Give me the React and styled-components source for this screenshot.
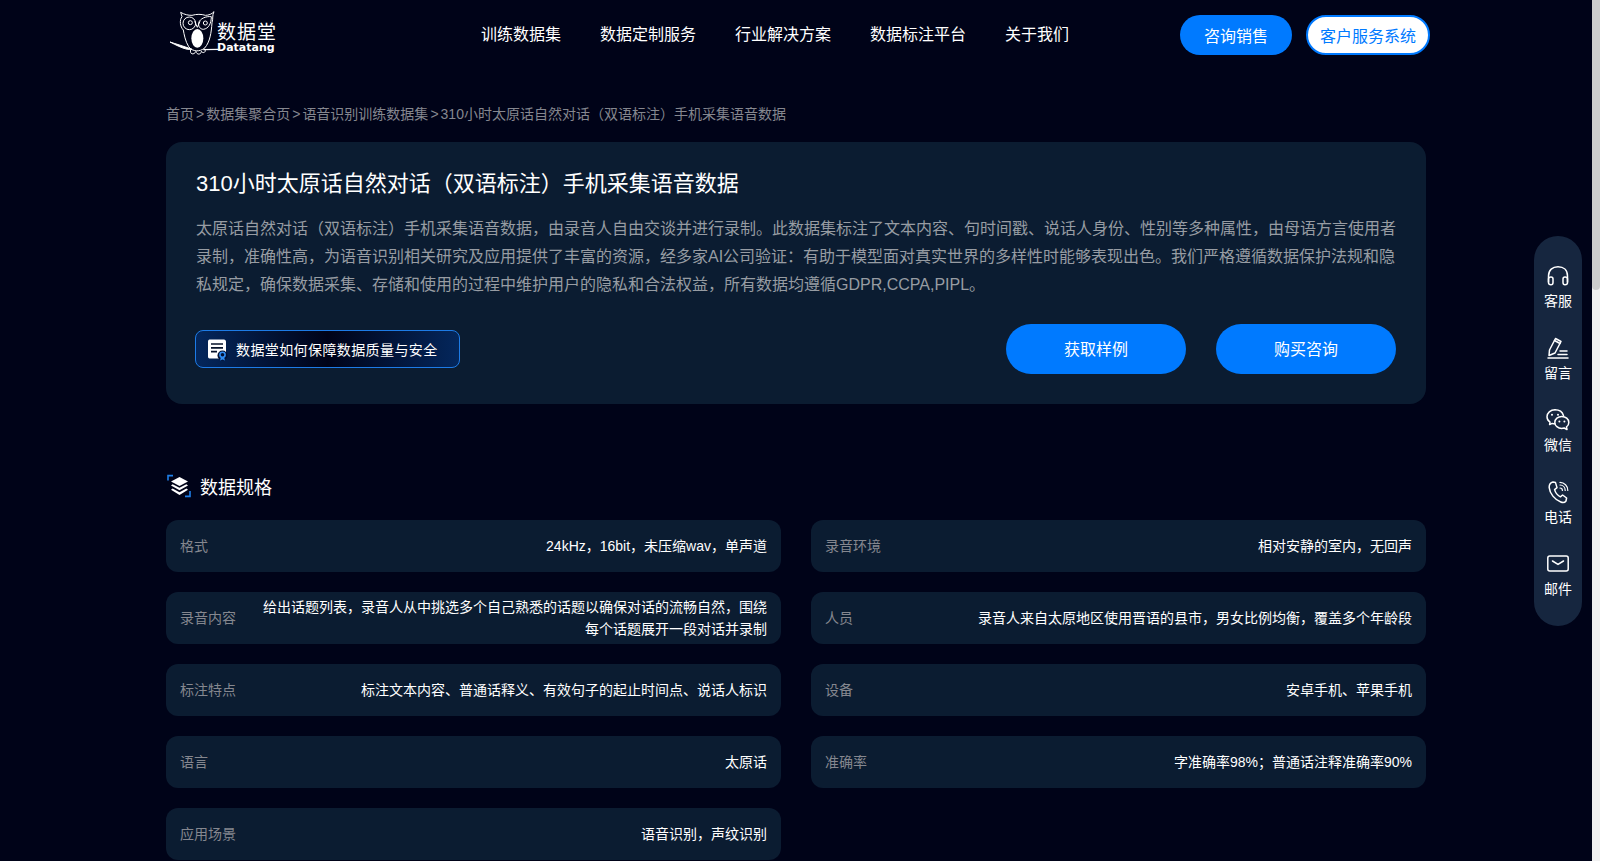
import React from 'react';
import styled, { createGlobalStyle } from 'styled-components';

const Global = createGlobalStyle`
  html { background: #000318; }
  body {
    margin: 0;
    background: #000318;
    color: #fff;
    font-family: "Liberation Sans", "Noto Sans CJK SC", sans-serif;
  }
  #root { width: 1592px; }
`;

const ScrollTrack = styled.div`
  position: fixed;
  top: 0;
  right: 0;
  bottom: 0;
  width: 8px;
  background: #f1f1f1;
`;

const ScrollThumb = styled.div`
  height: 290px;
  background: #cdcdcd;
  border-radius: 0 0 4px 4px;
`;

const Page = styled.div`
  width: 1260px;
  margin: 0 auto;
  padding-bottom: 40px;
`;

const Header = styled.header`
  height: 70px;
  display: flex;
  align-items: center;
`;

const Logo = styled.a`
  display: flex;
  width: 316px;
  height: 55px;
  margin-left: -1px;
  color: #fff;
`;

const LogoWords = styled.div`
  display: flex;
  flex-direction: column;
  margin-left: -8px;
  padding-top: 15px;
`;

const LogoName = styled.span`
  font-size: 19px;
  line-height: 19px;
  letter-spacing: 1px;
`;

const LogoLatin = styled.span`
  font-family: "DejaVu Sans", sans-serif;
  font-size: 11px;
  line-height: 10px;
  font-weight: 700;
  margin-top: 1px;
`;

const Nav = styled.nav`
  display: flex;
  gap: 39px;
  font-size: 16px;
  margin-top: -4px;
`;

const NavLink = styled.a`
  color: #fff;
  white-space: nowrap;
`;

const HeaderActions = styled.div`
  display: flex;
  gap: 14px;
  margin-left: auto;
  margin-right: -4px;
`;

const PillButton = styled.a`
  box-sizing: border-box;
  height: 40px;
  display: flex;
  align-items: center;
  justify-content: center;
  border-radius: 20px;
  font-size: 16px;
  width: ${p => p.$w}px;
  background: ${p => (p.$light ? '#fff' : '#007aff')};
  color: ${p => (p.$light ? '#007aff' : '#fff')};
  border: ${p => (p.$light ? '2px solid #007aff' : '0')};
`;

const Crumbs = styled.div`
  padding-top: 35px;
  height: 37px;
  font-size: 14px;
  line-height: 18px;
  color: #85878f;
  display: flex;
  gap: 2px;
`;

const IntroCard = styled.section`
  box-sizing: border-box;
  height: 262px;
  padding: 25px 30px 30px;
  background: #0b1c31;
  border-radius: 16px;
`;

const Title = styled.h1`
  margin: 0;
  font-size: 22px;
  line-height: 34px;
  font-weight: 400;
`;

const Desc = styled.p`
  margin: 14px 0 0;
  font-size: 16px;
  line-height: 28px;
  color: #979ca3;
`;

const IntroFoot = styled.div`
  margin-top: 25px;
  display: flex;
  align-items: center;
`;

const DocLink = styled.a`
  box-sizing: border-box;
  width: 265px;
  height: 38px;
  margin-left: -1px;
  display: flex;
  align-items: center;
  gap: 8px;
  padding-left: 11px;
  font-size: 14px;
  letter-spacing: 0.4px;
  border: 1px solid #1d7be6;
  border-radius: 8px;
  background: linear-gradient(90deg, #04275c 0%, #000318 50%, #04275c 100%);
  color: #fff;
`;

const FootActions = styled.div`
  display: flex;
  gap: 30px;
  margin-left: auto;
`;

const BigButton = styled.a`
  box-sizing: border-box;
  width: 180px;
  height: 50px;
  padding-bottom: 2px;
  border-radius: 25px;
  background: #007aff;
  color: #fff;
  font-size: 16px;
  display: flex;
  align-items: center;
  justify-content: center;
`;

const SectionHead = styled.h2`
  margin: 65px 0 0;
  height: 34px;
  display: flex;
  align-items: center;
  gap: 9px;
  font-size: 18px;
  font-weight: 400;
`;

const SpecGrid = styled.div`
  margin-top: 17px;
  display: grid;
  grid-template-columns: 615px 615px;
  column-gap: 30px;
  row-gap: 20px;
`;

const SpecRow = styled.div`
  box-sizing: border-box;
  height: 52px;
  padding: 0 14px;
  display: flex;
  align-items: center;
  gap: 20px;
  background: #0b1c31;
  border-radius: 12px;
  font-size: 14px;
  line-height: 22px;
`;

const SpecLabel = styled.span`
  flex: none;
  color: #85878f;
`;

const SpecValue = styled.span`
  flex: 1;
  text-align: right;
  color: #fff;
`;

const Side = styled.aside`
  position: fixed;
  left: 1534px;
  top: 236px;
  width: 48px;
  height: 390px;
  box-sizing: border-box;
  padding-top: 28px;
  border-radius: 24px;
  background: #16263f;
  display: flex;
  flex-direction: column;
  align-items: center;
  gap: 20px;
`;

const SideItem = styled.a`
  display: flex;
  flex-direction: column;
  align-items: center;
  gap: 3px;
  font-size: 14px;
  line-height: 20px;
  color: #fff;
  height: 52px;
`;

const Owl = () => (
  <svg width="60" height="55" viewBox="45 22 180 165" fill="none" stroke="#fff" strokeWidth="3">
    <path d="M92 35 C104 42 114 44 126 44 C140 40 154 40 166 44 C176 44 186 40 192 33 C186 44 190 54 186 66 C184 96 180 124 164 142 C150 154 128 154 116 138 C106 122 102 100 100 88 C90 78 88 58 96 48 Z" />
    <circle cx="118" cy="68" r="19" />
    <circle cx="121" cy="66" r="6" />
    <path d="M146 66 C150 54 168 46 184 48 C184 68 176 84 160 86 C150 86 144 76 146 66 Z" />
    <circle cx="166" cy="67" r="6" />
    <path d="M134 62 L142 80 L150 62" />
    <ellipse cx="142" cy="113" rx="18" ry="28" fill="#fff" stroke="none" />
    <path d="M60 124 C78 130 100 136 126 146 L112 146 C94 142 76 132 60 124 Z" fill="#fff" />
    <path d="M160 147 L206 146" strokeWidth="4" />
    <path d="M122 146 C118 162 132 164 138 152 C140 164 154 162 154 152 C160 160 170 154 164 144" />
  </svg>
);

const stroke = { fill: 'none', stroke: '#fff', strokeWidth: 1.5, strokeLinecap: 'round', strokeLinejoin: 'round' };

const Headset = () => (
  <svg width="24" height="24" viewBox="0 0 24 24" {...stroke}>
    <path d="M2.5 18 V12 C2.5 6 6.5 2.8 12 2.8 C17.5 2.8 21.5 6 21.5 12 V18" />
    <path d="M2.5 15 C2.5 13.6 3.6 13 5 13 C6.2 13 7 13.8 7 15 V18.5 C7 20 6.2 20.8 5 20.8 C3.6 20.8 2.5 20 2.5 18.5 Z" />
    <path d="M21.5 15 C21.5 13.6 20.4 13 19 13 C17.8 13 17 13.8 17 15 V18.5 C17 20 17.8 20.8 19 20.8 C20.4 20.8 21.5 20 21.5 18.5 Z" />
  </svg>
);
const Note = () => (
  <svg width="24" height="24" viewBox="0 0 24 24" {...stroke}>
    <path d="M2 22 H22" />
    <path d="M3 19.5 L3.5 14 L9.5 2.5 L15 5.5 L9 17 Z" />
    <path d="M8.5 4.5 L14 7.5" />
    <path d="M14 15 H21 M12 18.5 H21" />
  </svg>
);
const Wechat = () => (
  <svg width="24" height="24" viewBox="0 0 24 24" {...stroke}>
    <path d="M9 1.8 C4.4 1.8 1 5 1 8.8 C1 11 2.2 13 4 14.2 L3.6 16.6 L6.2 15.4 C7 15.6 7.8 15.8 8.6 15.8" />
    <path d="M17.5 7.6 C16.5 4.2 13 1.8 9 1.8" />
    <path d="M15.8 8.4 C19.6 8.4 22.8 11 22.8 14.4 C22.8 16.2 22 17.8 20.5 18.8 L21 21.6 L18.2 20 C17.4 20.2 16.6 20.4 15.8 20.4 C12 20.4 8.8 17.8 8.8 14.4 C8.8 11 12 8.4 15.8 8.4 Z" />
    <circle cx="6" cy="6.8" r="1" fill="#fff" stroke="none" />
    <circle cx="12" cy="6.8" r="1" fill="#fff" stroke="none" />
    <circle cx="13.4" cy="13.4" r="1" fill="#fff" stroke="none" />
    <circle cx="18.4" cy="13.4" r="1" fill="#fff" stroke="none" />
  </svg>
);
const Phone = () => (
  <svg width="24" height="24" viewBox="0 0 24 24" {...stroke}>
    <path d="M7 2 L9.5 2.6 L11 7.6 L8.6 9.6 C9.4 12.6 11.6 15.4 14.4 16.8 L16.6 15 L20.6 18 L20 21 C18.8 22.6 16.6 22.8 14.8 22 C8.6 19.6 3.8 13.6 3.2 7.6 C3 4.8 4.8 2.6 7 2 Z" />
    <path d="M14 8 C15.4 8 16.4 9 16.4 10.4" strokeWidth="1.2" />
    <path d="M14 5 C17 5 19.2 7.4 19.2 10.4" strokeWidth="1.2" />
    <path d="M14 2.4 C18.4 2.4 21.8 6 21.8 10.4" strokeWidth="1.2" />
  </svg>
);
const Mail = () => (
  <svg width="24" height="24" viewBox="0 0 24 24" {...stroke}>
    <rect x="1.8" y="4" width="20.4" height="15" rx="2" />
    <path d="M6.5 9 L12 12.4 L17.5 9" />
  </svg>
);

const DocIcon = () => (
  <svg width="21" height="24" viewBox="0 0 21 24">
    <path d="M2.5 2.5 H17 C18 2.5 19 3.5 19 4.5 V21.5 H2.5 C1.5 21.5 1 20.5 1 19.5 V4.5 C1 3.5 1.5 2.5 2.5 2.5 Z" fill="#fff" />
    <path d="M4 7 H16 M4 10.8 H16 M4 14.6 H10" stroke="#06122a" strokeWidth="1.7" />
    <circle cx="15.5" cy="18.5" r="5" fill="#021033" />
    <circle cx="15.5" cy="17.8" r="2.6" fill="none" stroke="#2f8cf2" strokeWidth="1.6" />
    <path d="M13 23.6 L14 20 H17 L18 23.6 L15.5 22.6 Z" fill="#2f8cf2" />
  </svg>
);

const SpecIcon = () => (
  <svg width="25" height="24" viewBox="0 0 25 24">
    <path d="M2 6.5 V1.6 H7 M24 17 V22.4 H19" fill="none" stroke="#1e7fe8" strokeWidth="1.6" />
    <path d="M13.5 3 L22 7.5 L13.5 12 L5 7.5 Z" fill="#fff" />
    <path d="M6.6 10.2 L13.5 13.8 L20.4 10.2 L22 11.4 L13.5 16.2 L5 11.4 Z" fill="#fff" />
    <path d="M6.6 14.6 L13.5 18.2 L20.4 14.6 L22 15.8 L13.5 21 L5 15.8 Z" fill="#fff" />
  </svg>
);

const navItems = ['训练数据集', '数据定制服务', '行业解决方案', '数据标注平台', '关于我们'];
const crumbs = ['首页', '>', '数据集聚合页', '>', '语音识别训练数据集', '>', '310小时太原话自然对话（双语标注）手机采集语音数据'];
const specs = [
  ['格式', '24kHz，16bit，未压缩wav，单声道'],
  ['录音环境', '相对安静的室内，无回声'],
  ['录音内容', '给出话题列表，录音人从中挑选多个自己熟悉的话题以确保对话的流畅自然，围绕每个话题展开一段对话并录制'],
  ['人员', '录音人来自太原地区使用晋语的县市，男女比例均衡，覆盖多个年龄段'],
  ['标注特点', '标注文本内容、普通话释义、有效句子的起止时间点、说话人标识'],
  ['设备', '安卓手机、苹果手机'],
  ['语言', '太原话'],
  ['准确率', '字准确率98%；普通话注释准确率90%'],
  ['应用场景', '语音识别，声纹识别'],
];
const sideItems = [
  [Headset, '客服'],
  [Note, '留言'],
  [Wechat, '微信'],
  [Phone, '电话'],
  [Mail, '邮件'],
];

export default function App() {
  return (
    <>
      <Global />
      <Page>
        <Header>
          <Logo>
            <Owl />
            <LogoWords>
              <LogoName>数据堂</LogoName>
              <LogoLatin>Datatang</LogoLatin>
            </LogoWords>
          </Logo>
          <Nav>
            {navItems.map(n => <NavLink key={n}>{n}</NavLink>)}
          </Nav>
          <HeaderActions>
            <PillButton $w={112}>咨询销售</PillButton>
            <PillButton $w={124} $light>客户服务系统</PillButton>
          </HeaderActions>
        </Header>
        <Crumbs>
          {crumbs.map((c, i) => <span key={i}>{c}</span>)}
        </Crumbs>
        <IntroCard>
          <Title>310小时太原话自然对话（双语标注）手机采集语音数据</Title>
          <Desc>太原话自然对话（双语标注）手机采集语音数据，由录音人自由交谈并进行录制。此数据集标注了文本内容、句时间戳、说话人身份、性别等多种属性，由母语方言使用者录制，准确性高，为语音识别相关研究及应用提供了丰富的资源，经多家AI公司验证：有助于模型面对真实世界的多样性时能够表现出色。我们严格遵循数据保护法规和隐私规定，确保数据采集、存储和使用的过程中维护用户的隐私和合法权益，所有数据均遵循GDPR,CCPA,PIPL。</Desc>
          <IntroFoot>
            <DocLink><DocIcon />数据堂如何保障数据质量与安全</DocLink>
            <FootActions>
              <BigButton>获取样例</BigButton>
              <BigButton>购买咨询</BigButton>
            </FootActions>
          </IntroFoot>
        </IntroCard>
        <SectionHead><SpecIcon />数据规格</SectionHead>
        <SpecGrid>
          {specs.map(([k, v]) => (
            <SpecRow key={k}>
              <SpecLabel>{k}</SpecLabel>
              <SpecValue>{v}</SpecValue>
            </SpecRow>
          ))}
        </SpecGrid>
      </Page>
      <Side>
        {sideItems.map(([Icon, label]) => (
          <SideItem key={label}><Icon />{label}</SideItem>
        ))}
      </Side>
      <ScrollTrack><ScrollThumb /></ScrollTrack>
    </>
  );
}
